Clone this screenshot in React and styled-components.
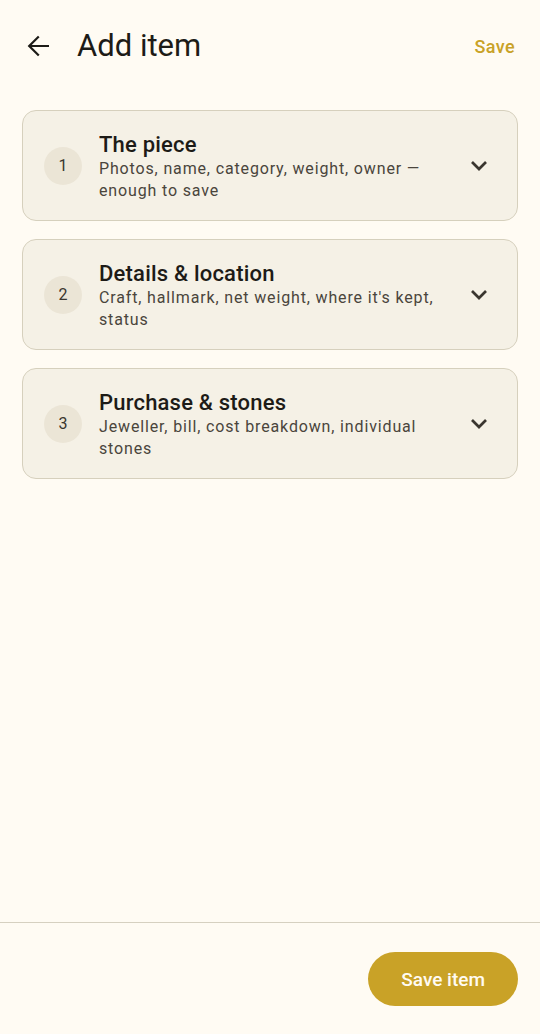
import React from 'react';
import styled, { createGlobalStyle } from 'styled-components';

const sections = [
  { n: 1, title: 'The piece', text: 'Photos, name, category, weight, owner — enough to save' },
  { n: 2, title: 'Details & location', text: "Craft, hallmark, net weight, where it's kept, status" },
  { n: 3, title: 'Purchase & stones', text: 'Jeweller, bill, cost breakdown, individual stones' },
];

const App = () => {
  return (
    <Page>
      <GlobalStyle />
      <Header>
        <BackButton aria-label="Back">
          <svg width="22" height="22" viewBox="0 0 22 22" fill="none">
            <path d="M21 11H2.5M11 2.2L2.2 11L11 19.8" stroke="#1d1b17" strokeWidth="2.2" strokeLinecap="square" />
          </svg>
        </BackButton>
        <Title>Add item</Title>
        <HeaderAction>Save</HeaderAction>
      </Header>
      <Sections>
        {sections.map((s) => (
          <Card key={s.n}>
            <StepBadge>{s.n}</StepBadge>
            <CardText>
              <CardTitle>{s.title}</CardTitle>
              <CardSubtitle>{s.text}</CardSubtitle>
            </CardText>
            <Chevron>
              <svg width="18" height="11" viewBox="0 0 18 11" fill="none">
                <path d="M2 2L9 9L16 2" stroke="#3a362f" strokeWidth="2.7" />
              </svg>
            </Chevron>
          </Card>
        ))}
      </Sections>
      <Footer>
        <PrimaryButton>Save item</PrimaryButton>
      </Footer>
    </Page>
  );
};

const GlobalStyle = createGlobalStyle`
  html, body {
    margin: 0;
    padding: 0;
    background: #fffbf3;
  }
  * {
    box-sizing: border-box;
  }
`;

const Page = styled.div`
  min-height: 100vh;
  display: flex;
  flex-direction: column;
  background: #fffbf3;
  font-family: Roboto, 'Noto Sans', sans-serif;
  color: #1d1b17;
`;

const Header = styled.header`
  height: 92px;
  display: flex;
  align-items: center;
  padding: 0 25px 0 26px;
`;

const BackButton = styled.div`
  width: 24px;
  height: 24px;
  display: flex;
  align-items: center;
  justify-content: center;
`;

const Title = styled.h1`
  flex: 1;
  margin: 0 0 0 27px;
  font-size: 31px;
  font-weight: 400;
  line-height: 36px;
`;

const HeaderAction = styled.span`
  color: #c9a227;
  font-size: 18px;
  font-weight: 500;
  letter-spacing: 0.4px;
`;

const Sections = styled.div`
  flex: 1;
  display: flex;
  flex-direction: column;
  gap: 18px;
  padding: 18px 22px 0 22px;
`;

const Card = styled.div`
  display: flex;
  align-items: center;
  min-height: 111px;
  padding: 16px 29px 16px 21px;
  background: #f5f1e6;
  border: 1.5px solid #d6d0bd;
  border-radius: 14px;
`;

const StepBadge = styled.div`
  width: 38px;
  height: 38px;
  flex-shrink: 0;
  border-radius: 50%;
  background: #ebe5d6;
  display: flex;
  align-items: center;
  justify-content: center;
  font-size: 16px;
  color: #3a362f;
`;

const CardText = styled.div`
  flex: 1;
  margin: 3px 14px 0 17px;
  display: flex;
  flex-direction: column;
`;

const CardTitle = styled.div`
  font-size: 22px;
  font-weight: 500;
  line-height: 26px;
  letter-spacing: 0.2px;
  color: #1d1b17;
`;

const CardSubtitle = styled.div`
  font-size: 16px;
  line-height: 22px;
  letter-spacing: 0.85px;
  color: #4a453c;
`;

const Chevron = styled.div`
  width: 18px;
  display: flex;
  align-items: center;
  justify-content: center;
`;

const Footer = styled.footer`
  display: flex;
  justify-content: flex-end;
  padding: 29px 22px 28px;
  border-top: 1.5px solid #d6d0c0;
`;

const PrimaryButton = styled.button`
  height: 54px;
  padding: 0 33px;
  border: none;
  border-radius: 27px;
  background: #c9a227;
  color: #fffbf3;
  font-family: Roboto, 'Noto Sans', sans-serif;
  font-size: 19px;
  font-weight: 500;
`;

export default App;
